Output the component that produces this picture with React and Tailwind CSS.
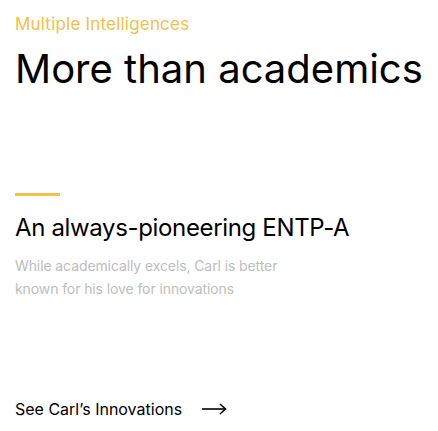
export default function App() {
  return (
    <div className="w-[438px] h-[431px] bg-white overflow-hidden pl-[15px] pt-[14px]" style={{ fontFamily: "Inter, 'Noto Sans', sans-serif" }}>
      <div className="text-[17px] leading-[20px] tracking-[0.2px] text-[#f3bf4a]">Multiple Intelligences</div>
      <h1 className="mt-[11px] text-[40px] leading-[48px] text-black tracking-[0px]">More than academics</h1>
      <div className="mt-[100px] w-[45px] h-[3px] bg-[#f2c14e]" />
      <h2 className="mt-[17px] text-[24px] leading-[30px] tracking-[-0.35px] text-black">An always-pioneering ENTP-A</h2>
      <p className="mt-[11px] text-[14px] leading-[23px] tracking-[-0.1px] text-[#bdbdbd] w-[300px]">
        While academically excels, Carl is better known for his love for innovations
      </p>
      <div className="mt-[99px] flex items-center gap-[20px] text-[16px] leading-[20px] text-black">
        <span>See Carl’s Innovations</span>
        <svg width="25" height="12" viewBox="0 0 25 12" fill="none" stroke="black" strokeWidth="1.6">
          <path d="M0 6 H23.5" />
          <path d="M18 1 L23.5 6 L18 11" />
        </svg>
      </div>
    </div>
  );
}
